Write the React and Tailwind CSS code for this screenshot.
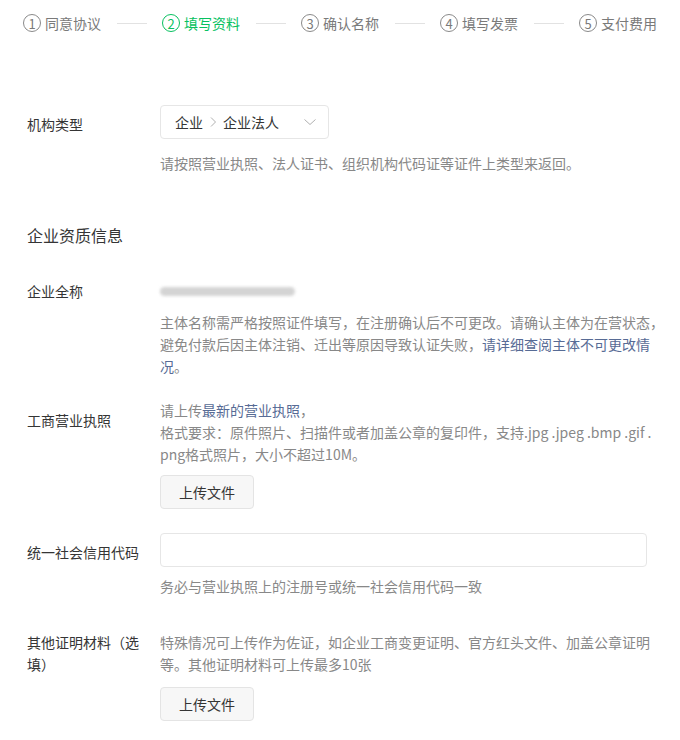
import React from "react";

const steps = [
  { n: "1", label: "同意协议" },
  { n: "2", label: "填写资料", active: true },
  { n: "3", label: "确认名称" },
  { n: "4", label: "填写发票" },
  { n: "5", label: "支付费用" },
];

function Steps() {
  return (
    <div className="flex items-center h-[46px] pl-[23px]">
      {steps.map((s, i) => (
        <React.Fragment key={s.n}>
          {i > 0 && <div className="ml-[16px] mr-[15px] w-[30px] h-px bg-[#e2e2e2]" />}
          <div className={`flex items-center gap-[4px] ${s.active ? "text-[#07c160]" : "text-[#7a7a7a]"}`}>
            <span
              className={`w-[18px] h-[18px] rounded-full border flex items-center justify-center text-[13px] leading-none ${
                s.active ? "border-[#07c160]" : "border-[#8a8a8a]"
              }`}
            >
              {s.n}
            </span>
            <span className="text-[14px]">{s.label}</span>
          </div>
        </React.Fragment>
      ))}
    </div>
  );
}

function Label({ children, className = "" }) {
  return (
    <div className={`w-[133px] shrink-0 pr-[10px] text-[14px] leading-[22px] text-[#353535] ${className}`}>
      {children}
    </div>
  );
}

function UploadButton() {
  return (
    <button className="w-[94px] h-[34px] rounded-[4px] border border-[#e4e4e4] bg-[#f7f7f7] text-[14px] text-[#353535]">
      上传文件
    </button>
  );
}

export default function App() {
  return (
    <div
      className="w-[680px] h-[740px] bg-white overflow-hidden"
      style={{ fontFamily: '"Noto Sans CJK SC", "Noto Sans", sans-serif' }}
    >
      <Steps />

      <div className="px-[27px]">
        {/* 机构类型 */}
        <div className="flex items-center mt-[59px]">
          <Label className="pt-[4px]">机构类型</Label>
          <div className="w-[169px] h-[34px] rounded-[4px] border border-[#e6e6e6] flex items-center pl-[14px] pr-[10px] text-[14px] text-[#353535]">
            <span>企业</span>
            <svg width="12" height="14" viewBox="0 0 12 14" className="mx-[4px]">
              <path d="M4 2.5l4.5 4.5-4.5 4.5" fill="none" stroke="#b0b0b0" strokeWidth="1" />
            </svg>
            <span>企业法人</span>
            <svg width="16" height="12" viewBox="0 0 16 12" className="ml-auto">
              <path d="M2.5 3.5l5.5 5 5.5-5" fill="none" stroke="#b0b0b0" strokeWidth="1" />
            </svg>
          </div>
        </div>
        <div className="ml-[133px] mt-[13px] text-[14px] leading-[22px] text-[#888]">
          请按照营业执照、法人证书、组织机构代码证等证件上类型来返回。
        </div>

        {/* 企业资质信息 */}
        <div className="mt-[49px] text-[16px] leading-[24px] text-[#353535]">企业资质信息</div>

        {/* 企业全称 */}
        <div className="flex mt-[33px]">
          <Label>企业全称</Label>
          <div className="flex-1">
            <div className="h-[22px] flex items-center">
              <div className="w-[135px] h-[9px] rounded-full bg-[#d4d4d4] blur-[1.5px]" />
            </div>
            <div className="mt-[9px] text-[14px] leading-[22px] text-[#888] whitespace-nowrap">
              主体名称需严格按照证件填写，在注册确认后不可更改。请确认主体为在营状态，
              <br />
              避免付款后因主体注销、迁出等原因导致认证失败，
              <span className="text-[#576b95]">请详细查阅主体不可更改情</span>
              <br />
              <span className="text-[#576b95]">况</span>。
            </div>
          </div>
        </div>

        {/* 工商营业执照 */}
        <div className="flex mt-[22px]">
          <Label className="pt-[10px]">工商营业执照</Label>
          <div className="flex-1">
            <div className="text-[14px] leading-[22px] text-[#888] whitespace-nowrap">
              请上传<span className="text-[#576b95]">最新的营业执照</span>，
              <br />
              格式要求：原件照片、扫描件或者加盖公章的复印件，支持.jpg .jpeg .bmp .gif .
              <br />
              png格式照片，大小不超过10M。
            </div>
            <div className="mt-[10px]">
              <UploadButton />
            </div>
          </div>
        </div>

        {/* 统一社会信用代码 */}
        <div className="flex items-center mt-[24px]">
          <Label className="pt-[4px]">统一社会信用代码</Label>
          <input
            type="text"
            className="w-[487px] h-[34px] rounded-[4px] border border-[#e6e6e6] outline-none px-[12px] text-[14px]"
          />
        </div>
        <div className="ml-[133px] mt-[8px] text-[14px] leading-[22px] text-[#888]">
          务必与营业执照上的注册号或统一社会信用代码一致
        </div>

        {/* 其他证明材料 */}
        <div className="flex mt-[34px]">
          <Label className="pr-[13px]">其他证明材料（选填）</Label>
          <div className="flex-1">
            <div className="text-[14px] leading-[22px] text-[#888] whitespace-nowrap">
              特殊情况可上传作为佐证，如企业工商变更证明、官方红头文件、加盖公章证明
              <br />
              等。其他证明材料可上传最多10张
            </div>
            <div className="mt-[12px]">
              <UploadButton />
            </div>
          </div>
        </div>
      </div>
    </div>
  );
}
